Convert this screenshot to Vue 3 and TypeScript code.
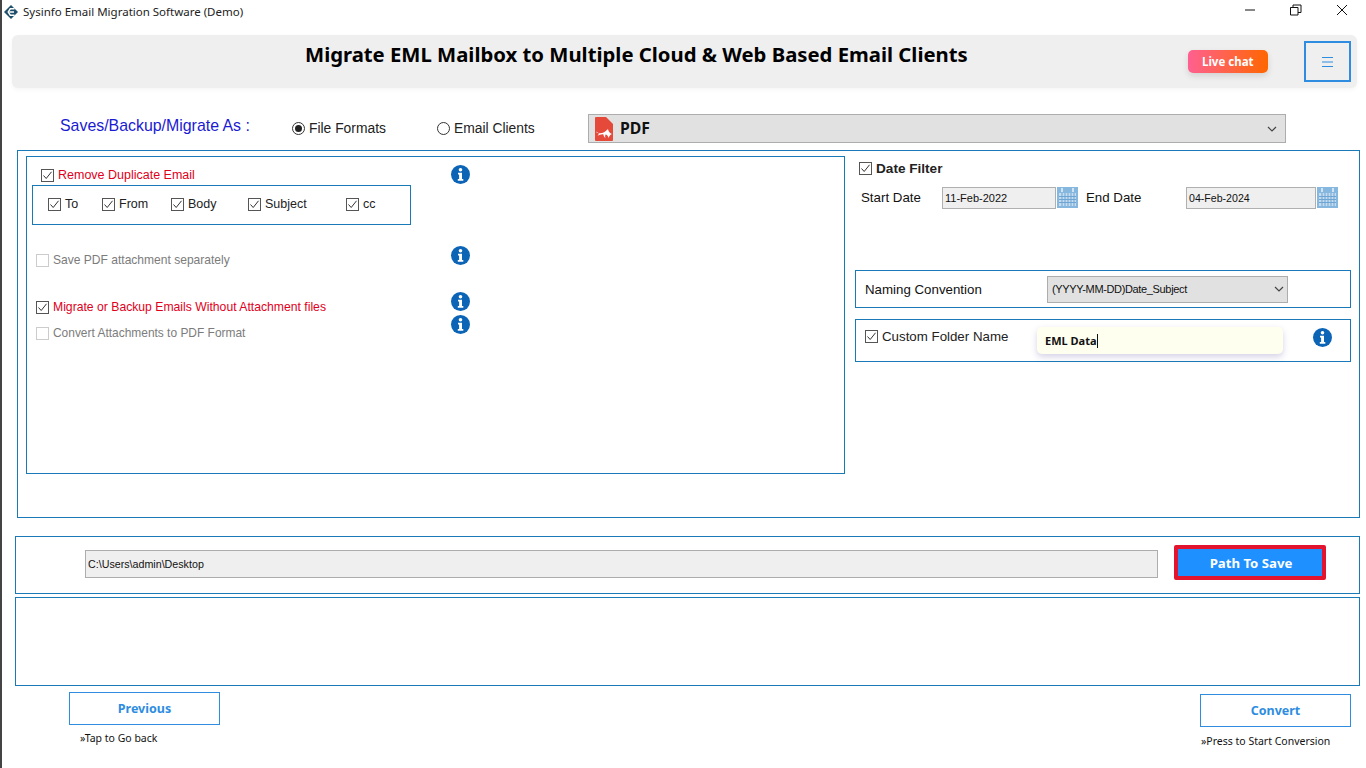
<script setup lang="ts">
const subChecks = ['To', 'From', 'Body', 'Subject', 'cc']
</script>

<template>
  <div class="app">
    <div class="titlebar">
      <svg class="logo" width="14" height="14" viewBox="0 0 14 14">
        <path d="M7 0 14 7 7 14 0 7Z" fill="#1d4e6b" />
        <path d="M10.500 3.800H6.300L4.200 7l2.100 3.200h4.200M5.600 7h4.400" fill="none" stroke="#fff" stroke-width="1.400" />
      </svg>
      <span class="app-name">Sysinfo Email Migration Software (Demo)</span>
      <div class="win-controls">
        <svg width="12" height="12" viewBox="0 0 12 12"><path d="M1 6h10" stroke="#111" fill="none" /></svg>
        <svg width="12" height="12" viewBox="0 0 12 12"><path d="M.5 3.500h7.500v7.500H.5zM3 3.500V1h8v7.500H8" stroke="#111" fill="none" /></svg>
        <svg width="12" height="12" viewBox="0 0 12 12"><path d="M1 1l10 10M11 1 1 11" stroke="#111" fill="none" /></svg>
      </div>
    </div>

    <header class="header">
      <h1 class="title">Migrate EML Mailbox to Multiple Cloud &amp; Web Based Email Clients</h1>
      <div class="live-chat">Live chat</div>
      <div class="menu-btn">
        <svg width="11" height="10" viewBox="0 0 11 10"><path d="M0 .5h11M0 5h11M0 9.500h11" stroke="#2e8de0" fill="none" /></svg>
      </div>
    </header>

    <div class="save-row">
      <span class="save-label">Saves/Backup/Migrate As :</span>
      <label class="radio radio-first"><span class="radio-dot on"></span>File Formats</label>
      <label class="radio radio-second"><span class="radio-dot"></span>Email Clients</label>
      <div class="format-select">
        <svg class="pdf-icon" width="18" height="24" viewBox="0 0 18 24">
          <path d="M1 0H11L18 7V23a1 1 0 0 1-1 1H1a1 1 0 0 1-1-1V1a1 1 0 0 1 1-1Z" fill="#e4493a" />
          <path d="M1.500 15.500c4 1.500 8 .5 11.500-3.500 .5 2.500 1.500 4 4 5-1.500 .5-2.500 1.500-3.500 4-.5-2-1.500-3.500-3-3.500-.5 1.500-.5 2.500 0 3.500-1.500-1-2-2.500-2-3.500-2-.5-4 .5-6 1.500 1-1 1.500-2 1-3-1-.5-1.500-1-2-1.500Z" fill="#fff" />
        </svg>
        <span class="format-name">PDF</span>
        <svg class="chev" width="10" height="6" viewBox="0 0 10 6"><path d="M1 1l4 4 4-4" stroke="#444" stroke-width="1.200" fill="none" /></svg>
      </div>
    </div>

    <section class="panel main-panel">
      <div class="options-box">
        <div class="options">
          <label class="check check-dup">
            <span class="cb"><svg width="13" height="13" viewBox="0 0 13 13"><path d="M2.500 6.500 5.200 9.500 10.500 2.800" stroke="#333" fill="none" /></svg></span>
            <span class="red">Remove Duplicate Email</span>
          </label>
          <div class="dup-box">
            <label v-for="name in subChecks" :key="name" class="check sub" :class="'sub-' + name">
              <span class="cb"><svg width="13" height="13" viewBox="0 0 13 13"><path d="M2.500 6.500 5.200 9.500 10.500 2.800" stroke="#333" fill="none" /></svg></span>
              {{ name }}
            </label>
          </div>
          <label class="check off row-save"><span class="cb"></span>Save PDF attachment separately</label>
          <label class="check row-migrate">
            <span class="cb"><svg width="13" height="13" viewBox="0 0 13 13"><path d="M2.500 6.500 5.200 9.500 10.500 2.800" stroke="#333" fill="none" /></svg></span>
            <span class="red">Migrate or Backup Emails Without Attachment files</span>
          </label>
          <label class="check off row-convert"><span class="cb"></span>Convert Attachments to PDF Format</label>
        </div>
        <div class="info-col">
          <svg class="info i1" width="19" height="19" viewBox="0 0 19 19"><circle cx="9.500" cy="9.500" r="9.500" fill="#0b64b5" /><circle cx="9.500" cy="4.700" r="1.800" fill="#fff" /><path d="M7 7.800h4v6.200h1.300v1.800H6.800V14h1.300V9.600H7Z" fill="#fff" /></svg>
          <svg class="info i2" width="19" height="19" viewBox="0 0 19 19"><circle cx="9.500" cy="9.500" r="9.500" fill="#0b64b5" /><circle cx="9.500" cy="4.700" r="1.800" fill="#fff" /><path d="M7 7.800h4v6.200h1.300v1.800H6.800V14h1.300V9.600H7Z" fill="#fff" /></svg>
          <svg class="info i3" width="19" height="19" viewBox="0 0 19 19"><circle cx="9.500" cy="9.500" r="9.500" fill="#0b64b5" /><circle cx="9.500" cy="4.700" r="1.800" fill="#fff" /><path d="M7 7.800h4v6.200h1.300v1.800H6.800V14h1.300V9.600H7Z" fill="#fff" /></svg>
          <svg class="info i4" width="19" height="19" viewBox="0 0 19 19"><circle cx="9.500" cy="9.500" r="9.500" fill="#0b64b5" /><circle cx="9.500" cy="4.700" r="1.800" fill="#fff" /><path d="M7 7.800h4v6.200h1.300v1.800H6.800V14h1.300V9.600H7Z" fill="#fff" /></svg>
        </div>
      </div>

      <div class="right-col">
        <label class="check date-check">
          <span class="cb"><svg width="13" height="13" viewBox="0 0 13 13"><path d="M2.500 6.500 5.200 9.500 10.500 2.800" stroke="#333" fill="none" /></svg></span>
          <strong>Date Filter</strong>
        </label>
        <div class="date-row">
          <span class="date-label start-label">Start Date</span>
          <span class="date-field start-field">11-Feb-2022</span>
          <svg class="cal" width="21" height="21" viewBox="0 0 21 21"><rect width="21" height="21" fill="#86b7df" /><rect x="2" y="6" width="17" height="13" fill="#c5dcf0" /><path d="M2 9.500h17M2 12.500h17M2 15.500h17M5 6v13M8 6v13M11 6v13M14 6v13M17 6v13" stroke="#6fa5d3" /><path d="M5 1v4M16 1v4" stroke="#e8f2fa" stroke-width="1.500" /></svg>
          <span class="date-label end-label">End Date</span>
          <span class="date-field end-field">04-Feb-2024</span>
          <svg class="cal" width="21" height="21" viewBox="0 0 21 21"><rect width="21" height="21" fill="#86b7df" /><rect x="2" y="6" width="17" height="13" fill="#c5dcf0" /><path d="M2 9.500h17M2 12.500h17M2 15.500h17M5 6v13M8 6v13M11 6v13M14 6v13M17 6v13" stroke="#6fa5d3" /><path d="M5 1v4M16 1v4" stroke="#e8f2fa" stroke-width="1.500" /></svg>
        </div>
        <div class="panel naming">
          <span class="naming-label">Naming Convention</span>
          <div class="naming-select">
            <span>(YYYY-MM-DD)Date_Subject</span>
            <svg width="10" height="6" viewBox="0 0 10 6"><path d="M1 1l4 4 4-4" stroke="#444" stroke-width="1.200" fill="none" /></svg>
          </div>
        </div>
        <div class="panel custom">
          <label class="check custom-check">
            <span class="cb"><svg width="13" height="13" viewBox="0 0 13 13"><path d="M2.500 6.500 5.200 9.500 10.500 2.800" stroke="#333" fill="none" /></svg></span>
            Custom Folder Name
          </label>
          <div class="custom-input"><span>EML Data</span><i class="caret"></i></div>
          <svg class="info" width="19" height="19" viewBox="0 0 19 19"><circle cx="9.500" cy="9.500" r="9.500" fill="#0b64b5" /><circle cx="9.500" cy="4.700" r="1.800" fill="#fff" /><path d="M7 7.800h4v6.200h1.300v1.800H6.800V14h1.300V9.600H7Z" fill="#fff" /></svg>
        </div>
      </div>
    </section>

    <section class="panel path-panel">
      <div class="path-field">C:\Users\admin\Desktop</div>
      <button class="path-btn">Path To Save</button>
    </section>

    <section class="panel log-panel"></section>

    <footer class="footer">
      <div class="nav nav-prev">
        <button class="nav-btn">Previous</button>
        <span class="hint">»Tap to Go back</span>
      </div>
      <div class="nav nav-next">
        <button class="nav-btn">Convert</button>
        <span class="hint">»Press to Start Conversion</span>
      </div>
    </footer>
  </div>
</template>

<style>
html, body { margin: 0; background: #fff; }
</style>

<style scoped>
.app {
  box-sizing: border-box;
  width: 1366px;
  height: 768px;
  overflow: hidden;
  border-left: 2px solid #444;
  background: #fff;
  display: flex;
  flex-direction: column;
  font-family: "Liberation Sans", Arial, sans-serif;
  color: #111;
}
.titlebar { height: 35px; flex: none; display: flex; align-items: flex-start; padding-left: 2px; }
.logo { margin-top: 5px; }
.app-name { font: 11.500px/24px "Noto Sans", sans-serif; margin-left: 5px; color: #222; }
.win-controls { margin-left: auto; display: flex; gap: 34px; padding: 4px 18px 0 0; }

.header {
  flex: none;
  box-sizing: border-box;
  margin-left: 10px;
  width: 1345px;
  height: 53px;
  background: #efefef;
  border-radius: 6px;
  box-shadow: 0 2px 4px rgba(0,0,0,.04);
  display: flex;
  align-items: center;
}
.title {
  margin: 0 0 0 293px;
  font: 700 20.300px/1 "Noto Sans", sans-serif;
  color: #000;
  white-space: nowrap;
  padding-bottom: 14px;
}
.live-chat {
  margin-left: 220px;
  width: 80px;
  height: 23px;
  border-radius: 5px;
  background: linear-gradient(90deg, #ff6090, #ff6600);
  color: #fff;
  font: 700 11.500px/23px "Noto Sans", sans-serif;
  text-align: center;
  box-shadow: 0 3px 6px rgba(0,0,0,.12);
}
.menu-btn {
  box-sizing: border-box;
  margin-left: 36px;
  width: 47px;
  height: 41px;
  border: 2px solid #2e8de0;
  display: flex;
  align-items: center;
  justify-content: center;
}

.save-row { flex: none; height: 62px; display: flex; align-items: flex-start; }
.save-label { margin: 28px 0 0 58px; font-size: 15.900px; line-height: 19px; color: #1a1ad2; white-space: nowrap; width: 232px; }
.radio { display: flex; align-items: center; font-size: 13.850px; line-height: 16px; color: #222; margin-top: 32px; }
.radio-first { width: 145px; }
.radio-second { width: 151px; }
.radio-dot { box-sizing: border-box; width: 13px; height: 13px; border: 1px solid #333; border-radius: 50%; margin-right: 4px; display: block; position: relative; }
.radio-dot.on::after { content: ""; position: absolute; inset: 2px; border-radius: 50%; background: #222; }
.format-select {
  box-sizing: border-box;
  margin-top: 26px;
  width: 698px;
  height: 29px;
  background: #e1e1e1;
  border: 1px solid #adadad;
  display: flex;
  align-items: center;
  padding: 0 8px 0 6px;
}
.pdf-icon { flex: none; }
.format-name { font: 700 15.800px/20px "Noto Sans", sans-serif; margin: 0 0 2px 7px; color: #111; }
.chev { margin-left: auto; }

.panel { box-sizing: border-box; border: 1px solid #1a7ab8; flex: none; }
.main-panel { margin-left: 15px; width: 1343px; height: 368px; display: flex; align-items: flex-start; }
.options-box {
  box-sizing: border-box;
  margin: 5px 0 0 8px;
  width: 819px;
  height: 318px;
  border: 1px solid #1a7ab8;
  display: flex;
}
.options { width: 424px; flex: none; }
.check { display: flex; align-items: center; font-size: 12.200px; line-height: 15px; color: #222; white-space: nowrap; }
.cb { box-sizing: border-box; flex: none; width: 13px; height: 13px; border: 1px solid #555; background: #fff; margin-right: 4px; display: block; }
.cb svg { display: block; margin: -1px; }
.red { color: #e0001b; }
.off { color: #7c7c7c; }
.off .cb { border-color: #ccc; }
.check-dup { margin: 11px 0 0 14px; font-size: 12.500px; }
.dup-box {
  box-sizing: border-box;
  margin: 2px 0 0 5px;
  width: 379px;
  height: 40px;
  border: 1px solid #1a7ab8;
  display: flex;
  padding: 11px 0 0 15px;
}
.sub { height: 15px; font-size: 12.500px; }
.sub-To { width: 54px; }
.sub-From { width: 69px; }
.sub-Body { width: 77px; }
.sub-Subject { width: 98px; }
.row-save { margin: 28px 0 0 9px; font-size: 12.050px; }
.row-migrate { margin: 32px 0 0 9px; }
.row-convert { margin: 11px 0 0 9px; font-size: 11.950px; }
.info-col { display: flex; flex-direction: column; }
.info { display: block; flex: none; }
.i1 { margin-top: 8px; }
.i2 { margin-top: 62px; }
.i3 { margin-top: 27px; }
.i4 { margin-top: 4px; }

.right-col { margin-left: 10px; width: 496px; flex: none; }
.date-check { margin: 10px 0 0 4px; font-size: 13.600px; }
.date-row { display: flex; align-items: flex-start; margin-top: 11px; height: 83px; font-size: 13.300px; }
.date-label { line-height: 22px; }
.start-label { margin-left: 6px; width: 81px; }
.end-label { margin-left: 8px; width: 100px; }
.date-field { box-sizing: border-box; height: 22px; background: #efefef; border: 1px solid #b0b0b0; line-height: 21px; padding-left: 2px; }
.start-field { width: 114px; font-size: 11px; }
.end-field { width: 130px; font-size: 10.600px; }
.cal { margin-left: 1px; }
.naming { width: 496px; height: 38px; display: flex; align-items: center; }
.naming-label { margin-left: 9px; width: 182px; font-size: 13.300px; }
.naming-select {
  box-sizing: border-box;
  width: 241px;
  height: 27px;
  background: #e1e1e1;
  border: 1px solid #adadad;
  font-size: 11px;
  letter-spacing: -.35px;
  padding: 0 3px 0 4px;
  display: flex;
  align-items: center;
  justify-content: space-between;
}
.custom { margin-top: 11px; width: 496px; height: 43px; display: flex; align-items: flex-start; }
.custom-check { margin: 9px 0 0 9px; width: 172px; font-size: 13.300px; }
.custom-input {
  box-sizing: border-box;
  margin-top: 7px;
  width: 246px;
  height: 27px;
  background: #fffff0;
  border-radius: 5px;
  box-shadow: 0 3px 6px rgba(90,80,160,.25);
  padding-left: 8px;
  font: 700 11px/27px "Noto Sans", sans-serif;
  display: flex;
  align-items: center;
}
.caret { display: block; width: 1px; height: 14px; background: #111; }
.custom .info { margin: 8px 0 0 30px; }

.path-panel { margin: 18px 0 0 13px; width: 1345px; height: 58px; display: flex; align-items: flex-start; }
.path-field {
  box-sizing: border-box;
  margin: 13px 0 0 69px;
  width: 1073px;
  height: 28px;
  background: #efefef;
  border: 1px solid #adadad;
  font-size: 10.700px;
  line-height: 26px;
  padding-left: 2px;
}
.path-btn {
  box-sizing: border-box;
  margin: 8px 0 0 16px;
  width: 152px;
  height: 35px;
  background: #1e90ff;
  border: 4px solid #e3142d;
  border-radius: 2px;
  color: #fff;
  font: 700 13.200px "Noto Sans", sans-serif;
  padding: 0 0 0 2px;
}
.log-panel { margin: 3px 0 0 13px; width: 1345px; height: 89px; }

.footer { flex: 1; display: flex; justify-content: space-between; align-items: flex-start; }
.nav { display: flex; flex-direction: column; align-items: flex-start; }
.nav-prev { margin: 6px 0 0 67px; }
.nav-next { margin: 8px 15px 0 0; }
.nav-btn {
  box-sizing: border-box;
  width: 151px;
  height: 33px;
  background: #fff;
  border: 1px solid #2e8de0;
  color: #2e8de0;
  font: 700 12.500px "Noto Sans", sans-serif;
  padding: 0;
}
.hint { font: 10.500px/14px "Noto Sans", sans-serif; color: #111; margin-top: 6px; }
.nav-prev .hint { margin-left: 11px; }
.nav-next .hint { margin: 7px 0 0 1px; }
</style>
